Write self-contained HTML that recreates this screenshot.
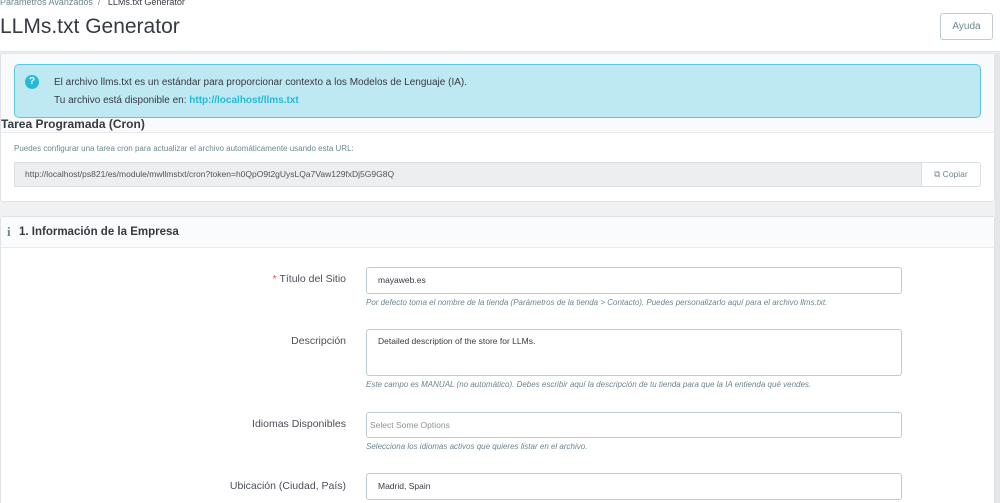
<!DOCTYPE html><html><head><meta charset="utf-8"><style>
*{box-sizing:border-box;margin:0;padding:0}
html,body{width:1000px;height:503px;overflow:hidden}
body{background:#eff1f2;font-family:"Liberation Sans",sans-serif;color:#363a41;position:relative}
.abs{position:absolute}
.hdr{left:0;top:0;width:1000px;height:52px;background:#fff;border-bottom:1px solid #dfe3e6}
.bc{left:0;top:-3px;font-size:9px;color:#6c868e}
.bc b{font-weight:normal;color:#363a41}
h1{position:absolute;left:0;top:15px;font-size:21px;font-weight:normal;color:#363a41}
.ayuda{left:940px;top:13px;width:53px;height:27px;border:1px solid #bbcdd2;border-radius:3px;font-size:10px;color:#6c868e;text-align:center;line-height:25px;background:#fff}
.p1{left:0;top:53px;width:995px;height:149px;background:#fff;border:1px solid #dfe3e6;border-radius:3px}
.band{left:1px;top:54px;width:993px;height:79px;background:#f9fafb;border-bottom:1px solid #e9ecef}
.alert{left:14px;top:64px;width:967px;height:54px;background:#bfe9f2;border:1px solid #5bc8e0;border-radius:5px;font-size:10px;color:#363a41;line-height:18px;padding:9px 0 0 39px}
.alert a{color:#25b9d7;font-weight:bold;text-decoration:none}
.q{left:25px;top:75px;width:14px;height:14px;border-radius:50%;background:#25b9d7;color:#fff;font-size:10px;font-weight:bold;text-align:center;line-height:14px}
.t{left:1px;top:117px;font-size:12px;font-weight:bold;color:#363a41}
.small{left:14px;top:144px;font-size:8px;color:#6c868e}
.url{left:14px;top:162px;width:908px;height:25px;background:#eceeef;border:1px solid #dcdfe1;font-size:8.5px;color:#555;line-height:23px;padding-left:10px}
.cp{left:921px;top:162px;width:60px;height:25px;border:1px solid #dcdfe1;border-radius:0 3px 3px 0;background:#fff;font-size:8.5px;color:#6c868e;line-height:23px;text-align:center}
.p2{left:0;top:216px;width:995px;height:300px;background:#fff;border:1px solid #dfe3e6;border-radius:3px}
.p2h{left:1px;top:217px;width:993px;height:31px;background:#fafbfc;border-bottom:1px solid #e9ecef;font-size:11.5px;font-weight:bold;color:#363a41;line-height:31px;padding-left:18px}
.ii{left:7px;top:224px;font-size:13px;color:#6c868e;font-weight:bold;font-family:"Liberation Serif",serif}
.lbl{right:654px;font-size:10.5px;color:#4a4f57;text-align:right}
.lbl span{color:#e84f3c}
.inp{left:366px;width:536px;border:1px solid #bbcdd2;border-radius:3px;background:#fff;font-size:8.5px;color:#363a41;padding:0 0 0 11px}
.help{left:366px;font-size:8px;font-style:italic;color:#6c868e}
.sb{left:995px;top:53px;width:5px;height:450px;background:#e4e6e8}
</style></head><body>
<div class="abs hdr"></div>
<div class="abs bc">Parámetros Avanzados &nbsp;/ &nbsp; <b>LLMs.txt Generator</b></div>
<h1>LLMs.txt Generator</h1>
<div class="abs ayuda">Ayuda</div>
<div class="abs p1"></div>
<div class="abs band"></div>
<div class="abs alert">El archivo llms.txt es un estándar para proporcionar contexto a los Modelos de Lenguaje (IA).<br>Tu archivo está disponible en: <a>http://localhost/llms.txt</a></div>
<div class="abs q">?</div>
<div class="abs t">Tarea Programada (Cron)</div>
<div class="abs small">Puedes configurar una tarea cron para actualizar el archivo automáticamente usando esta URL:</div>
<div class="abs url">http://localhost/ps821/es/module/mwllmstxt/cron?token=h0QpO9t2gUysLQa7Vaw129fxDj5G9G8Q</div>
<div class="abs cp">⧉ Copiar</div>
<div class="abs p2"></div>
<div class="abs p2h">1. Información de la Empresa</div>
<div class="abs ii">i</div>
<div class="abs lbl" style="top:273px"><span>*</span> Título del Sitio</div>
<div class="abs inp" style="top:267px;height:27px;line-height:25px">mayaweb.es</div>
<div class="abs help" style="top:298px">Por defecto toma el nombre de la tienda (Parámetros de la tienda &gt; Contacto). Puedes personalizarlo aquí para el archivo llms.txt.</div>
<div class="abs lbl" style="top:335px">Descripción</div>
<div class="abs inp" style="top:329px;height:47px;padding-top:6px">Detailed description of the store for LLMs.</div>
<div class="abs help" style="top:380px">Este campo es MANUAL (no automático). Debes escribir aquí la descripción de tu tienda para que la IA entienda qué vendes.</div>
<div class="abs lbl" style="top:418px">Idiomas Disponibles</div>
<div class="abs inp" style="top:412px;height:26px;line-height:24px;color:#8a9499;padding-left:3px">Select Some Options</div>
<div class="abs help" style="top:442px">Selecciona los idiomas activos que quieres listar en el archivo.</div>
<div class="abs lbl" style="top:480px">Ubicación (Ciudad, País)</div>
<div class="abs inp" style="top:473px;height:27px;line-height:25px">Madrid, Spain</div>
<div class="abs sb"></div>
</body></html>
